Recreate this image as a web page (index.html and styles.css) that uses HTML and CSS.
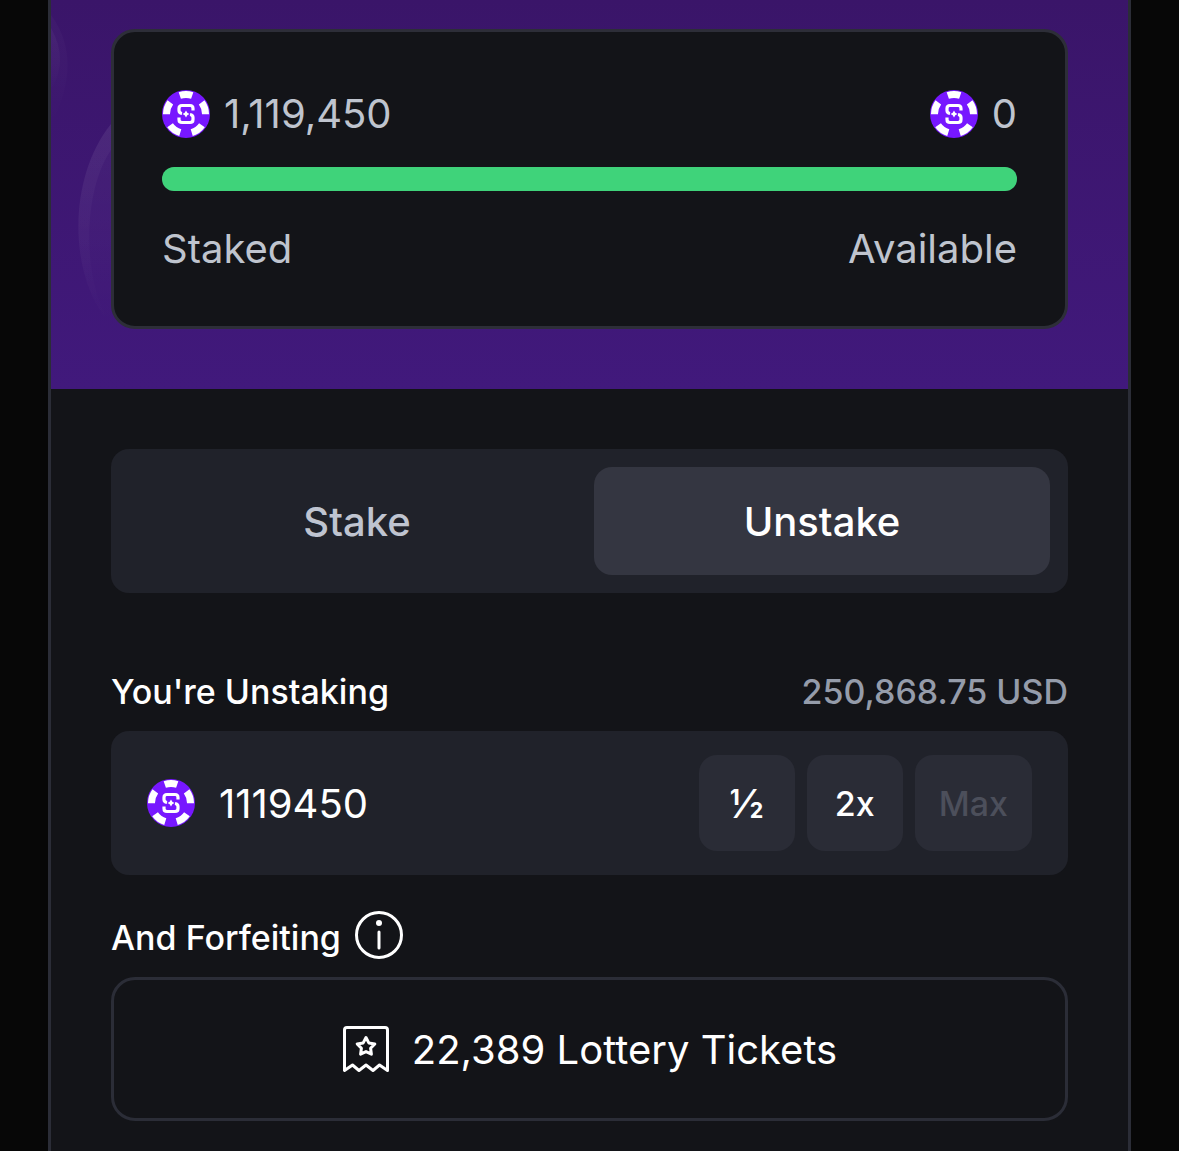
FILE: index.html
```html
<!DOCTYPE html>
<html lang="en">
<head>
  <meta charset="UTF-8">
  <meta name="viewport" content="width=device-width, initial-scale=1">
  <title>Unstake</title>
  <link rel="stylesheet" href="styles.css">
</head>
<body>
  <!-- Shared chip icon -->
  <svg class="sprite" aria-hidden="true">
    <symbol id="chip" viewBox="0 0 48 48">
      <circle cx="24" cy="24" r="24" fill="#7717ff"/>
      <circle cx="24" cy="24" r="19.5" fill="none" stroke="#fff" stroke-width="7" pathLength="100" stroke-dasharray="10.4 9.6" stroke-dashoffset="5.2" transform="rotate(-90 24 24)"/>
      <path d="M31 20.500V18.500Q31 15.500 28 15.500H20Q17 15.500 17 18.500V20.500Q17 23 20 23.500M17 27.500V29.500Q17 32.500 20 32.500H28Q31 32.500 31 29.500V27.500Q31 25 28 24.500" fill="none" stroke="#fff" stroke-width="3.200"/>
      <path d="M24 20.500L25.300 22.700L27.500 24L25.300 25.300L24 27.500L22.700 25.300L20.500 24L22.700 22.700Z" fill="#fff"/>
    </symbol>
  </svg>

  <main class="panel">
    <!-- Balance -->
    <section class="hero">
      <svg class="hero-art" width="200" height="389" viewBox="0 0 200 389" fill="none" aria-hidden="true">
        <defs>
          <linearGradient id="fade" x1="0" y1="0" x2="0" y2="1">
            <stop offset="0" stop-color="#fff" stop-opacity=".04"/>
            <stop offset=".5" stop-color="#fff" stop-opacity=".025"/>
            <stop offset="1" stop-color="#fff" stop-opacity="0"/>
          </linearGradient>
        </defs>
        <path d="M60 124C15 180 18 280 60 325C30 280 32 190 60 150Z" fill="url(#fade)"/>
        <path d="M60 124C15 180 18 280 60 325Z" fill="url(#fade)"/>
        <path d="M0 15Q33 60 0 125Z" fill="url(#fade)" opacity=".6"/>
        <path d="M0 28Q18 60 0 90Z" fill="url(#fade)"/>
      </svg>
      <div class="balance-card">
        <div class="row">
          <span class="amount"><svg class="chip"><use href="#chip"/></svg>1,119,450</span>
          <span class="amount"><svg class="chip"><use href="#chip"/></svg>0</span>
        </div>
        <div class="bar"><div class="bar-fill" style="width: 100%"></div></div>
        <div class="row">
          <span>Staked</span>
          <span>Available</span>
        </div>
      </div>
    </section>

    <section class="content">
      <!-- Tabs -->
      <div class="tabs">
        <button type="button">Stake</button>
        <button type="button" class="active">Unstake</button>
      </div>

      <!-- Amount -->
      <div class="label-row">
        <label for="amount">You're Unstaking</label>
        <span class="usd">250,868.75 USD</span>
      </div>
      <div class="input-box">
        <svg class="chip"><use href="#chip"/></svg>
        <input type="text" id="amount" value="1119450" inputmode="numeric">
        <div class="quick">
          <button type="button" class="half">½</button>
          <button type="button">2x</button>
          <button type="button" disabled>Max</button>
        </div>
      </div>

      <!-- Forfeiting -->
      <div class="forfeit-label">
        <span>And Forfeiting</span>
        <svg class="icon" viewBox="0 0 48 48" fill="none" stroke="#fff" aria-hidden="true">
          <circle cx="24" cy="24" r="22.500" stroke-width="3"/>
          <circle cx="24" cy="12" r="3" fill="#fff" stroke="none"/>
          <path d="M24 21V37" stroke-width="3" stroke-linecap="round"/>
        </svg>
      </div>
      <div class="tickets">
        <svg class="icon" viewBox="0 0 48 48" fill="none" stroke="#fff" stroke-width="3" stroke-linejoin="round" stroke-linecap="round" aria-hidden="true">
          <path d="M2.500 45.500V5Q2.500 2.500 5 2.500H43Q45.500 2.500 45.500 5V45.500L37.500 40L31 45.500L24 40L17 45.500L10.500 40Z"/>
          <path d="M24 12.500L26.800 17.900L32.800 18.900L28.600 23.200L29.400 29.200L24 26.600L18.600 29.200L19.400 23.200L15.200 18.900L21.200 17.900Z"/>
        </svg>
        <span>22,389 Lottery Tickets</span>
      </div>
    </section>
  </main>
</body>
</html>
```

FILE: styles.css
```css
/* Base */
* { box-sizing: border-box; margin: 0; padding: 0; }
body {
  font-family: Inter, 'Liberation Sans', sans-serif;
  font-size: 40px;
  line-height: 63px;
  background: #070707;
  color: #fff;
  padding: 0 48px;
}
button, input {
  font: inherit;
  color: inherit;
  border: none;
}
button {
  cursor: pointer;
}
.sprite {
  position: absolute;
  width: 0;
  height: 0;
}
.chip, .icon {
  width: 48px;
  height: 48px;
  flex: none;
}
.panel {
  min-height: 100vh;
  background: #131418;
  border: solid #2b2d37;
  border-width: 0 3px;
}
/* Balance */
.hero {
  position: relative;
  overflow: hidden;
  padding: 29px 60px 60px;
  background: linear-gradient(#3a1569, #41197c);
}
.hero-art {
  position: absolute;
  top: 0;
  left: 0;
}
.balance-card {
  position: relative;
  padding: 50px 48px 46px;
  background: #131418;
  border: 3px solid #2d2e38;
  border-radius: 24px;
  color: #bfc4ce;
}
.row {
  display: flex;
  justify-content: space-between;
}
.amount {
  display: flex;
  align-items: center;
  gap: 14px;
}
.bar {
  height: 24px;
  margin: 22px 0 26px;
  border-radius: 12px;
  background: #2b2d37;
}
.bar-fill {
  height: 100%;
  border-radius: 12px;
  background: #3fd37a;
}
.content {
  padding: 60px 60px 30px;
}
/* Tabs */
.tabs {
  display: flex;
  gap: 9px;
  padding: 18px;
  background: #20222a;
  border-radius: 18px;
  margin-bottom: 72px;
}
.tabs button {
  flex: 1;
  height: 108px;
  background: none;
  border-radius: 18px;
  font-weight: 500;
  color: #bfc4d0;
}
.tabs button.active {
  background: #343641;
  color: #fff;
}
/* Amount */
.label-row {
  display: flex;
  justify-content: space-between;
  font-size: 34px;
  line-height: 54px;
  font-weight: 500;
  margin-bottom: 12px;
}
.usd {
  color: #959caa;
}
.input-box {
  display: flex;
  align-items: center;
  padding: 24px 36px;
  background: #20222a;
  border-radius: 18px;
  margin-bottom: 36px;
}
.input-box input {
  flex: 1;
  min-width: 0;
  padding: 0 24px;
  background: none;
  outline: none;
}
.quick {
  display: flex;
  gap: 12px;
}
.quick button {
  min-width: 96px;
  height: 96px;
  padding: 0 24px;
  background: #2a2c36;
  border-radius: 18px;
  font-size: 34px;
  font-weight: 500;
}
.quick .half {
  font-size: 40px;
}
.quick button:disabled {
  color: #4c4f5b;
  cursor: default;
}
/* Forfeiting */
.forfeit-label {
  display: flex;
  align-items: flex-start;
  gap: 14px;
  font-size: 34px;
  line-height: 54px;
  font-weight: 500;
  margin-bottom: 12px;
}
.tickets {
  display: flex;
  align-items: center;
  justify-content: center;
  gap: 22px;
  height: 144px;
  border: 3px solid #2b2d37;
  border-radius: 24px;
}
```
